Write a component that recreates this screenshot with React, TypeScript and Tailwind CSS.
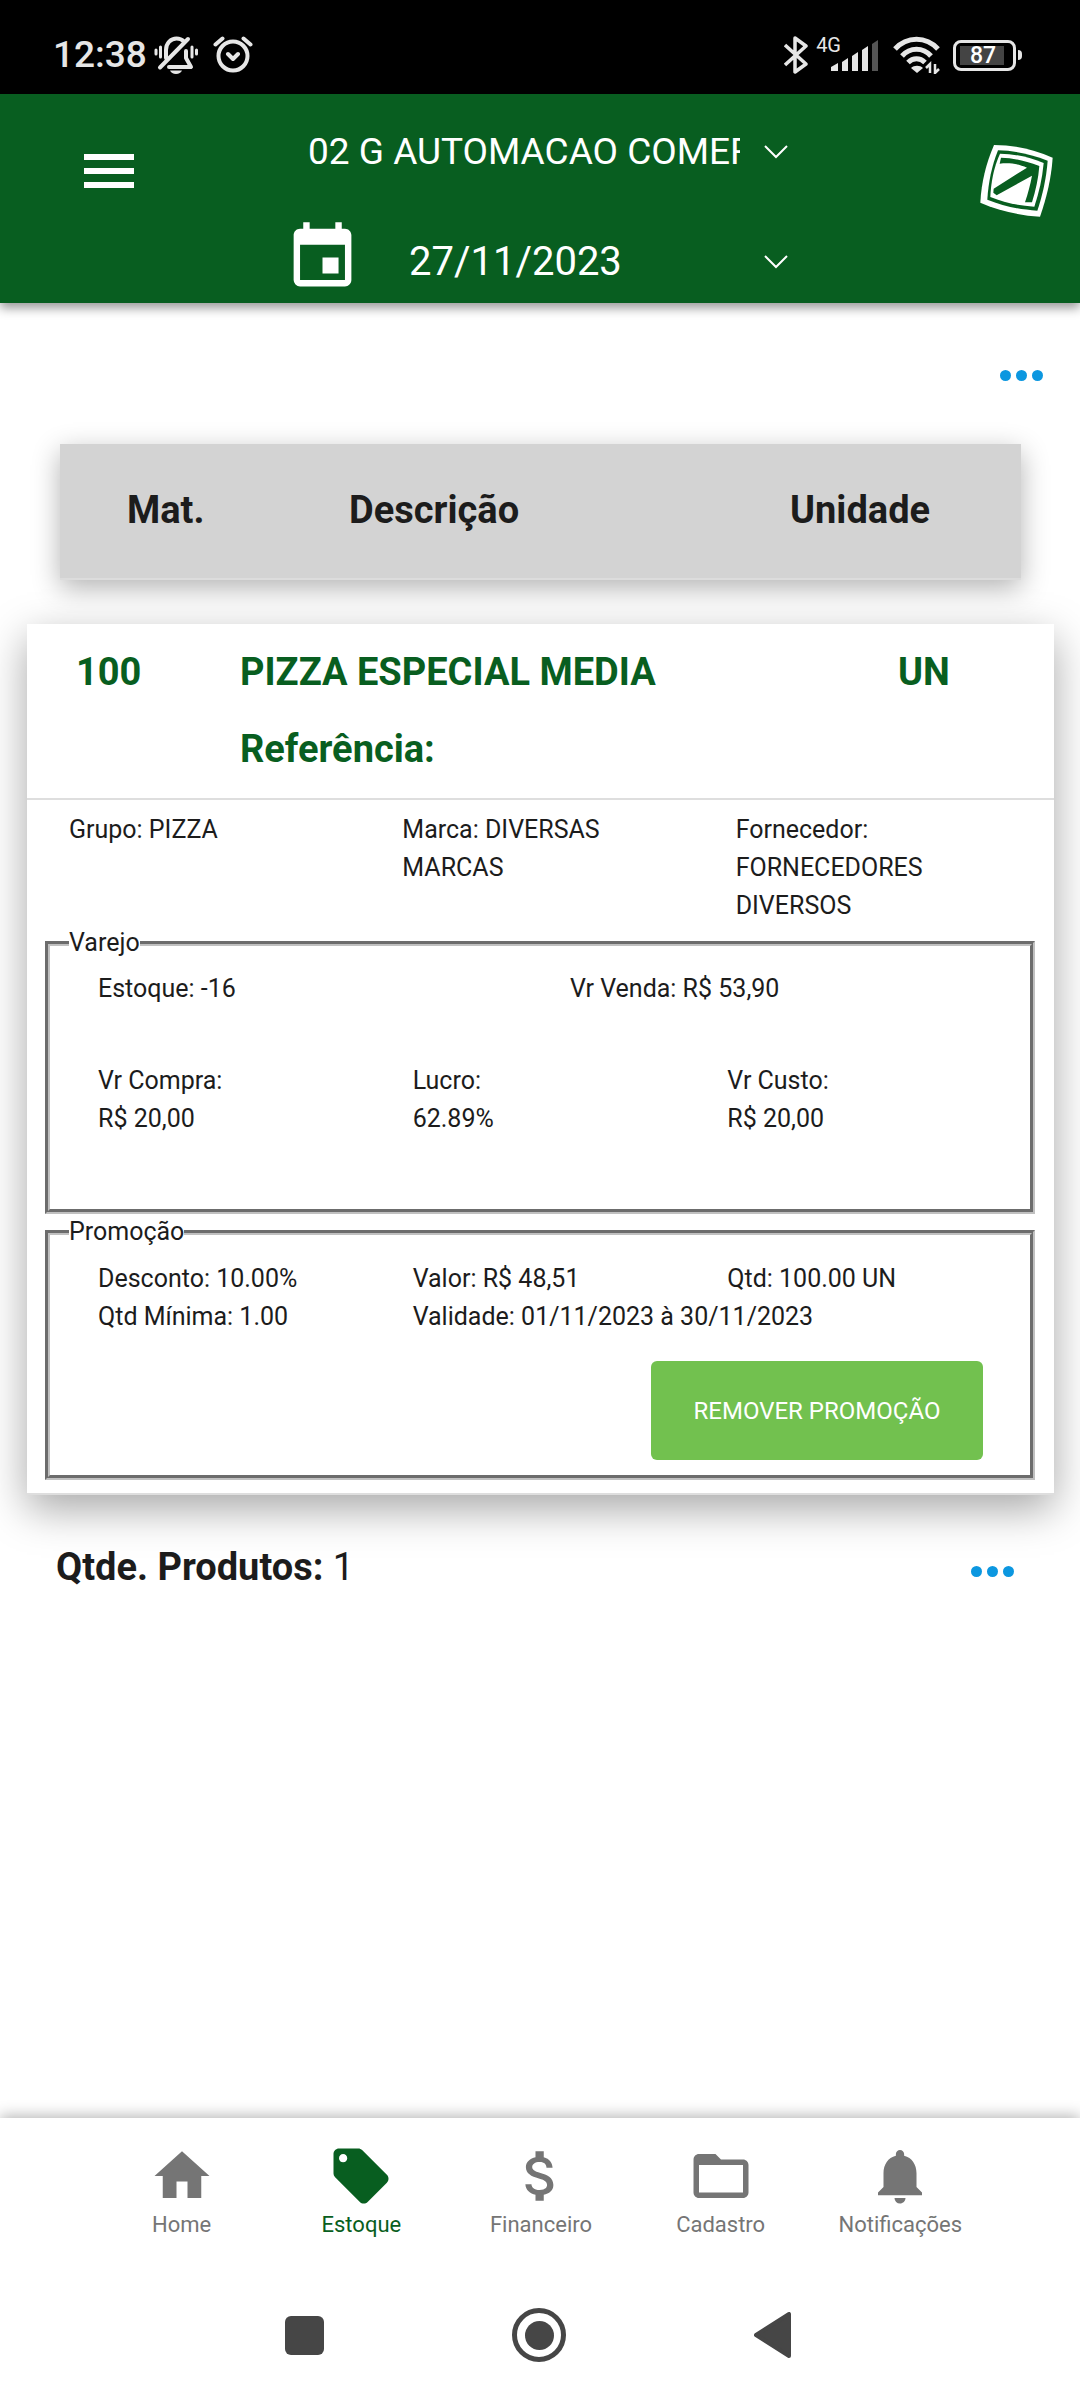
import type { ReactNode } from "react";
import {
  MdAttachMoney,
  MdEvent,
  MdFolderOpen,
  MdHome,
  MdLocalOffer,
  MdNotifications,
} from "react-icons/md";

const tabs = [
  { label: "Home", icon: MdHome },
  { label: "Estoque", icon: MdLocalOffer, active: true },
  { label: "Financeiro", icon: MdAttachMoney },
  { label: "Cadastro", icon: MdFolderOpen },
  { label: "Notificações", icon: MdNotifications },
];

function StatusBar() {
  return (
    <div className="flex h-[94px] items-center justify-between bg-black pr-[58px] pl-[53px] text-[#e6e6e6]">
      <div className="flex items-center pt-4">
        <span className="text-[37px] leading-[42px] font-medium">12:38</span>
        <svg className="ml-[7px] h-[38px] w-[45px]" viewBox="0 0 45 38" fill="none" stroke="currentColor" strokeWidth="4" strokeLinecap="round" strokeLinejoin="round">
          <path d="M2 14v4M6.500 11v10M38 11v10M42.500 14v4" strokeWidth="3" />
          <path d="M12 22v-8c0-7 5-11.500 10.500-11.500 3 0 5.500 1 7.500 3M32 15v7l5 9H15M6 31.500L34 3" />
          <path d="M16 34.500h12c-1 2-3 3.500-6 3.500s-5-1.500-6-3.500z" fill="currentColor" stroke="none" />
        </svg>
        <svg className="ml-3.5 h-[38px] w-10" viewBox="0 0 40 38" fill="none" stroke="currentColor" strokeWidth="4" strokeLinecap="round" strokeLinejoin="round">
          <circle cx="20" cy="20" r="14.500" />
          <path d="M2.500 8.500l7-6M37.500 8.500l-7-6M15 18l5 5 5-5" />
        </svg>
      </div>
      <div className="flex items-center pt-4">
        <svg className="h-[38px] w-6" viewBox="0 0 24 38" fill="none" stroke="currentColor" strokeWidth="3.500" strokeLinejoin="round">
          <path d="M1 9l21 19-11 8V2l11 8L1 29" />
        </svg>
        <span className="ml-2 self-start text-[20px] leading-[18px]">4G</span>
        <svg className="-ml-2.5 h-[38px] w-12" viewBox="0 0 48 38" fill="currentColor">
          <path d="M0 31l7-4v8H0zM11 26l6-4v13h-6zM21 20l6-4v19h-6zM31 14l6-4v25h-6z" />
          <path d="M41 8l6-4v31h-6z" fill="#555" />
        </svg>
        <svg className="ml-3.5 h-[38px] w-12" viewBox="0 0 48 38" fill="none" stroke="currentColor" strokeWidth="5">
          <path d="M2 13c12-13 31-13 43 0M9 20c8-9 21-9 29 0M15 26.500c5-5 12-5 17 0" />
          <path d="M18 32c3-3 9-3 12 0l-6 5z" fill="currentColor" stroke="none" />
          <path d="M37 37V28l-4 4M42 28v9l4-4" strokeWidth="2.500" />
        </svg>
        <div className="ml-3 flex h-[31px] w-[63px] items-center rounded-lg border-3 border-[#e6e6e6] px-1">
          <span className="h-[19px] w-[44px] bg-[#444] pl-2.5 text-[23px] leading-[20px] font-medium text-white">87</span>
        </div>
        <div className="ml-0.5 h-2.5 w-1 rounded-r-full bg-[#e6e6e6]" />
      </div>
    </div>
  );
}

function Caret() {
  return (
    <svg className="pointer-events-none h-3.5 w-6 shrink-0" viewBox="0 0 24 14" fill="none" stroke="currentColor" strokeWidth="2">
      <path d="M1 1l11 11L23 1" />
    </svg>
  );
}

function Logo() {
  return (
    <svg className="h-[74px] w-[74px]" viewBox="62 72 222 222" fill="none">
      <path d="M104 75c60 0 118 13 176 38-4 60-18 120-38 177-62-4-122-17-179-42 3-61 17-117 41-173z" fill="#fff" />
      <path d="M116 91c50 1 99 11 149 31-4 52-15 103-31 150-52-3-101-13-150-33 3-51 13-100 32-148z" fill="#085e20" />
      <path d="M122 101c43 1 84 9 131 28-4 46-14 89-28 131-45-3-88-11-132-29 2-45 10-88 29-130z" fill="#fff" />
      <path d="M125 113c36 1 72 9 115 25-3 38-11 74-22 109h-21c9-28 16-52 21-80L112 226l-10-8 1-12 100-63c-24-11-50-15-82-12z" fill="#085e20" />
    </svg>
  );
}

function Header() {
  return (
    <header className="relative flex h-[209px] justify-between bg-[#085e20] pr-[26px] pl-[84px] text-white shadow-[0_5px_10px_rgba(0,0,0,0.4)]">
      <button aria-label="Menu" className="mt-[60px] flex h-[34px] w-[50px] flex-col justify-between">
        <span className="h-1.5 w-full bg-white" />
        <span className="h-1.5 w-full bg-white" />
        <span className="h-1.5 w-full bg-white" />
      </button>
      <div className="mr-10 flex w-[506px] flex-col pt-9">
        <div className="flex h-[43px] items-center pl-[24px]">
          <select aria-label="Empresa" className="w-[432px] appearance-none overflow-hidden bg-transparent text-[37px] leading-[43px] whitespace-nowrap">
            <option>02 G AUTOMACAO COMERCIAL</option>
          </select>
          <span className="ml-6">
            <Caret />
          </span>
        </div>
        <div className="mt-[46px] flex h-[77px] items-center">
          <MdEvent className="size-[77px] shrink-0" />
          <div className="ml-[48px] flex grow items-center pt-2 pr-0.5">
            <select aria-label="Data" className="grow appearance-none bg-transparent text-[40px] leading-[46px]">
              <option>27/11/2023</option>
            </select>
            <Caret />
          </div>
        </div>
      </div>
      <div className="mt-[50px]">
        <Logo />
      </div>
    </header>
  );
}

function MoreButton() {
  return (
    <button aria-label="Mais opções" className="flex gap-[5px] py-2">
      <span className="size-[11px] rounded-full bg-[#0c97e0]" />
      <span className="size-[11px] rounded-full bg-[#0c97e0]" />
      <span className="size-[11px] rounded-full bg-[#0c97e0]" />
    </button>
  );
}

function Group({ title, children }: { title: string; children: ReactNode }) {
  return (
    <fieldset className="border-[5px] border-[#c0c0c0] pr-0.5 pl-[34px] [border-style:groove]">
      <legend className="-ml-[15px] leading-[30px]">{title}</legend>
      {children}
    </fieldset>
  );
}

function ProductCard() {
  return (
    <article className="mt-11 mr-[26px] ml-[27px] border-b-2 border-[#dedede] bg-white pb-[13px] text-[25px] leading-[38px] shadow-[0_14px_40px_rgba(0,0,0,0.35)]">
      <div className="flex border-b-2 border-[#dedede] pt-[10px] pb-[10px] text-[38px] leading-[77px] font-bold text-[#085e20]">
        <span className="w-[213px] pl-[49px]">100</span>
        <div className="grow">
          <h2>PIZZA ESPECIAL MEDIA</h2>
          <p>Referência:</p>
        </div>
        <span className="w-[156px]">UN</span>
      </div>
      <div className="grid grid-cols-3 pt-[11px] pb-[3px] pl-[27px]">
        <p className="pl-[15px]">Grupo: PIZZA</p>
        <p className="pl-[15px]">
          Marca: DIVERSAS
          <br />
          MARCAS
        </p>
        <p className="pl-[15px]">
          Fornecedor:
          <br />
          FORNECEDORES
          <br />
          DIVERSOS
        </p>
      </div>
      <div className="flex flex-col gap-[3px] pr-[19px] pl-[18px]">
        <Group title="Varejo">
          <div className="grid grid-cols-2 pt-3">
            <p className="pl-3.5">Estoque: -16</p>
            <p className="pl-3.5">Vr Venda: R$ 53,90</p>
          </div>
          <div className="grid grid-cols-3 pt-[54px] pb-[71px]">
            <p className="pl-3.5">
              Vr Compra:
              <br />
              R$ 20,00
            </p>
            <p className="pl-3.5">
              Lucro:
              <br />
              62.89%
            </p>
            <p className="pl-3.5">
              Vr Custo:
              <br />
              R$ 20,00
            </p>
          </div>
        </Group>
        <Group title="Promoção">
          <div className="grid grid-cols-3 pt-[13px]">
            <p className="pl-3.5">Desconto: 10.00%</p>
            <p className="pl-3.5">Valor: R$ 48,51</p>
            <p className="pl-3.5">Qtd: 100.00 UN</p>
            <p className="pl-3.5">Qtd Mínima: 1.00</p>
            <p className="col-span-2 pl-3.5">Validade: 01/11/2023 à 30/11/2023</p>
          </div>
          <div className="flex justify-end pt-[25px] pr-[45px] pb-[15px]">
            <button className="h-[99px] w-[332px] rounded-md bg-[#72c14f] text-[24px] text-white">
              REMOVER PROMOÇÃO
            </button>
          </div>
        </Group>
      </div>
    </article>
  );
}

function TabBar() {
  return (
    <nav className="relative flex h-[166px] justify-center bg-white pt-[25px] pl-0.5 shadow-[0_-2px_14px_rgba(0,0,0,0.3)]">
      {tabs.map(({ label, icon: Icon, active }) => (
        <a
          key={label}
          href="#"
          className={`flex w-1/6 flex-col items-center text-[22px] leading-[26px] ${active ? "text-[#085e20]" : "text-[#757575]"}`}
        >
          <Icon className="size-[66px]" />
          <span className="mt-[3px]">{label}</span>
        </a>
      ))}
    </nav>
  );
}

function SystemNav() {
  return (
    <div className="relative flex h-[116px] items-center justify-center gap-[188px] bg-white pr-1 pb-[14px] text-[#464646]">
      <button aria-label="Recentes" className="size-[39px] rounded-md bg-current" />
      <button aria-label="Início" className="flex size-[54px] items-center justify-center rounded-full border-[5px] border-current">
        <span className="size-[29px] rounded-full bg-current" />
      </button>
      <button aria-label="Voltar">
        <svg className="h-[46px] w-[37px]" viewBox="0 0 37 46" fill="currentColor" stroke="currentColor" strokeWidth="4" strokeLinejoin="round">
          <path d="M2 23L35 2v42z" />
        </svg>
      </button>
    </div>
  );
}

export default function App() {
  return (
    <div className="flex min-h-screen flex-col bg-white font-['Roboto',sans-serif] text-[#1c1c1c]">
      <StatusBar />
      <Header />
      <main className="grow">
        <div className="flex justify-end pt-[59px] pr-[37px]">
          <MoreButton />
        </div>
        <div className="mt-[55px] mr-[59px] ml-[60px] flex h-[136px] items-center border-b-2 border-[#dcdcdc] bg-[#d3d3d3] pb-0.5 text-[38px] font-bold shadow-[0_8px_26px_rgba(0,0,0,0.3)]">
          <span className="w-[289px] pl-[67px]">Mat.</span>
          <span className="grow">Descrição</span>
          <span className="w-[231px]">Unidade</span>
        </div>
        <ProductCard />
        <div className="flex items-center justify-between pt-[50px] pr-[66px] pl-14 text-[38px] leading-[44px]">
          <p>
            <b>Qtde. Produtos:</b> 1
          </p>
          <div className="pt-2">
            <MoreButton />
          </div>
        </div>
      </main>
      <TabBar />
      <SystemNav />
    </div>
  );
}
